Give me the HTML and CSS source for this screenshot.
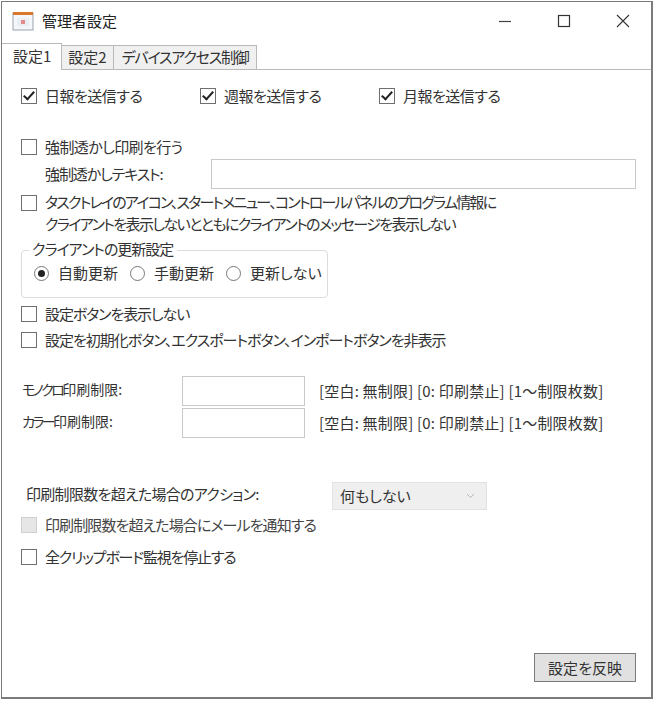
FILE: index.html
```html
<!DOCTYPE html>
<html lang="ja">
<head>
  <meta charset="UTF-8">
  <title>管理者設定</title>
  <link rel="stylesheet" href="styles.css">
</head>
<body>
  <div class="window">
    <div class="titlebar">
      <svg class="app-icon" width="22" height="20" viewBox="0 0 22 20">
        <rect x="1" y="2" width="20" height="17" fill="#f4f6fa" stroke="#9aa3b0"/>
        <rect x="1" y="1" width="20" height="3" fill="#d9772b"/>
        <rect x="5" y="7" width="12" height="8" fill="#e9edf4"/>
        <rect x="9" y="9" width="4" height="4" fill="#e58a8a"/>
      </svg>
      <span class="title">管理者設定</span>
      <div class="controls">
        <svg width="14" height="14" viewBox="0 0 14 14"><path d="M1 7.5H13" stroke="#444" stroke-width="1.2"/></svg>
        <svg width="14" height="14" viewBox="0 0 14 14"><rect x="1.5" y="1.5" width="11" height="11" fill="none" stroke="#333" stroke-width="1.2"/></svg>
        <svg width="14" height="14" viewBox="0 0 14 14"><path d="M1 1L13 13M13 1L1 13" stroke="#333" stroke-width="1.1"/></svg>
      </div>
    </div>

    <div class="tabs">
      <div class="tab active">設定1</div>
      <div class="tab">設定2</div>
      <div class="tab tab-device">デバイスアクセス制御</div>
    </div>

    <div class="panel">
      <div class="row report-row">
        <label class="check report"><span class="box checked"></span>日報を送信する</label>
        <label class="check report"><span class="box checked"></span>週報を送信する</label>
        <label class="check report"><span class="box checked"></span>月報を送信する</label>
      </div>

      <label class="check watermark"><span class="box"></span>強制透かし印刷を行う</label>
      <div class="row watermark-text">
        <span class="wm-label">強制透かしテキスト:</span>
        <span class="input wm-input"></span>
      </div>

      <label class="check multiline"><span class="box"></span><span><span class="line-a">タスクトレイのアイコン、スタートメニュー、コントロールパネルのプログラム情報に</span><span class="line-b">クライアントを表示しないとともにクライアントのメッセージを表示しない</span></span></label>

      <div class="group">
        <div class="group-title">クライアントの更新設定</div>
        <div class="row radios">
          <label class="radio"><span class="dot on"></span>自動更新</label>
          <label class="radio"><span class="dot"></span>手動更新</label>
          <label class="radio"><span class="dot"></span>更新しない</label>
        </div>
      </div>

      <label class="check after-group"><span class="box"></span>設定ボタンを表示しない</label>
      <label class="check next"><span class="box"></span>設定を初期化ボタン、エクスポートボタン、インポートボタンを非表示</label>

      <div class="row limit first-limit">
        <span class="limit-label"><span class="kana">モノクロ</span>印刷制限:</span>
        <span class="input limit-input"></span>
        <span class="hint">[空白: 無制限] [0: 印刷禁止] [1～制限枚数]</span>
      </div>
      <div class="row limit">
        <span class="limit-label"><span class="kana">カラー</span>印刷制限:</span>
        <span class="input limit-input"></span>
        <span class="hint">[空白: 無制限] [0: 印刷禁止] [1～制限枚数]</span>
      </div>

      <div class="row action">
        <span class="action-label">印刷制限数を超えた場合のアクション:</span>
        <div class="select">
          何もしない
          <svg width="9" height="6" viewBox="0 0 9 6"><path d="M1 1L4.5 4.5L8 1" fill="none" stroke="#b5b5b5"/></svg>
        </div>
      </div>
      <label class="check mail"><span class="box disabled"></span>印刷制限数を超えた場合にメールを通知する</label>
      <label class="check clip"><span class="box"></span>全クリップボード監視を停止する</label>

      <div class="footer">
        <button class="apply">設定を反映</button>
      </div>
    </div>
  </div>
</body>
</html>
```

FILE: styles.css
```css
/* ウィンドウ全体 */
body {
  margin: 0;
  width: 654px;
  height: 701px;
  background: #fff;
  font-family: "Noto Sans CJK JP", "Noto Sans", sans-serif;
  font-size: 15px;
  font-feature-settings: "palt";
  line-height: 20px;
  color: #333;
  overflow: hidden;
}
.window {
  width: 652px;
  height: 698px;
  margin-left: 1px;
  margin-top: 1px;
  border: 1px solid #7b7b7b;
  border-width: 1px 2px 2px 1px;
  box-sizing: border-box;
  display: flex;
  flex-direction: column;
}
.titlebar {
  height: 41px;
  flex: none;
  display: flex;
  align-items: center;
  padding: 0 0 4px 10px;
  box-sizing: border-box;
}
.app-icon {
  margin-right: 8px;
}
.title {
  color: #222;
  font-feature-settings: normal;
}
.controls {
  margin-left: auto;
  display: flex;
  gap: 45px;
  padding-right: 21px;
}

/* タブ */
.tabs {
  display: flex;
  height: 27px;
  flex: none;
  align-items: flex-end;
  position: relative;
  z-index: 1;
  margin-bottom: -1px;
}
.tab {
  height: 25px;
  line-height: 21px;
  padding: 0 6px;
  background: #f0f0f0;
  border: 1px solid #b9b9b9;
  box-sizing: border-box;
  margin-left: -1px;
}
.tab.active {
  height: 27px;
  line-height: 24px;
  background: #fff;
  border-left: 0;
  border-bottom: 0;
  margin-left: 0;
  padding: 0 10px 0 11px;
}
.tab-device {
  letter-spacing: -1.2px;
  padding: 0 7px 0 8px;
}
.panel {
  flex: 1;
  border-top: 1px solid #b9b9b9;
  padding: 16px 0 0 19px;
  display: flex;
  flex-direction: column;
}
.row {
  display: flex;
  align-items: center;
}

/* チェックボックス */
.check {
  display: flex;
  align-items: center;
  height: 20px;
  white-space: nowrap;
}
.box {
  width: 16px;
  height: 16px;
  border: 1px solid #6f6f6f;
  box-sizing: border-box;
  margin-right: 8px;
  flex: none;
  background: #fff;
  position: relative;
}
.box.checked::after {
  content: "";
  position: absolute;
  left: 4px;
  top: 0;
  width: 4px;
  height: 9px;
  border: solid #222;
  border-width: 0 2px 2px 0;
  transform: rotate(42deg);
}
.box.disabled {
  background: #e6e6e6;
  border-color: #cfcfcf;
}
.report {
  width: 179px;
  letter-spacing: -0.5px;
}
.watermark {
  margin-top: 31px;
  letter-spacing: -0.6px;
}
.watermark-text {
  margin-top: 2px;
  padding-left: 24px;
  height: 30px;
}
.wm-label {
  width: 166px;
  letter-spacing: -1.1px;
}
.input {
  display: block;
  background: #fff;
  border: 1px solid #c9c9c9;
  box-sizing: border-box;
}
.wm-input {
  width: 425px;
  height: 30px;
}
.multiline {
  margin-top: 2px;
  height: auto;
  align-items: flex-start;
  line-height: 22px;
}
.multiline .box {
  margin-top: 4px;
}
.line-a,
.line-b {
  display: block;
}
.line-a {
  letter-spacing: -1.8px;
}
.line-b {
  letter-spacing: -1.6px;
}

/* 更新設定グループ */
.group {
  position: relative;
  margin-top: 15px;
  width: 307px;
  height: 48px;
  border: 1px solid #dcdcdc;
  border-radius: 4px;
  box-sizing: border-box;
  padding: 12px 0 0 12px;
}
.group-title {
  position: absolute;
  left: 7px;
  top: -12px;
  padding: 0 4px 0 3px;
  background: #fff;
  letter-spacing: -1px;
}
.radios {
  gap: 12px;
}
.radio {
  display: flex;
  align-items: center;
}
.dot {
  width: 15px;
  height: 15px;
  border: 1px solid #777;
  border-radius: 50%;
  box-sizing: border-box;
  margin-right: 9px;
  position: relative;
}
.dot.on::after {
  content: "";
  position: absolute;
  left: 3px;
  top: 3px;
  width: 7px;
  height: 7px;
  border-radius: 50%;
  background: #222;
}
.after-group {
  margin-top: 6px;
  letter-spacing: -1.1px;
}
.next {
  margin-top: 6px;
  letter-spacing: -1px;
}

/* 印刷制限 */
.limit {
  height: 31px;
  margin-top: 1px;
  padding-left: 1px;
}
.first-limit {
  margin-top: 25px;
}
.limit-label {
  width: 160px;
  margin-top: -3px;
  font-size: 14px;
}
.kana {
  letter-spacing: -2.6px;
}
.limit-input {
  width: 123px;
  height: 30px;
}
.hint {
  margin-left: 14px;
  letter-spacing: 0.2px;
}
.action {
  margin-top: 44px;
  padding-left: 5px;
  height: 28px;
}
.action-label {
  width: 306px;
  margin-top: -5px;
  letter-spacing: -0.7px;
}
.select {
  width: 155px;
  height: 28px;
  background: #efefef;
  border: 1px solid #e2e2e2;
  box-sizing: border-box;
  display: flex;
  align-items: center;
  justify-content: space-between;
  padding: 0 11px 0 7px;
}
.mail {
  margin-top: 5px;
  color: #444;
  letter-spacing: -0.9px;
}
.clip {
  margin-top: 12px;
  letter-spacing: -1.2px;
}

/* ボタン */
.footer {
  margin-top: auto;
  display: flex;
  justify-content: flex-end;
  padding: 0 15px 15px 0;
}
.apply {
  width: 102px;
  height: 29px;
  background: #e1e1e1;
  border: 1px solid #7a7a7a;
  padding: 0;
  font: inherit;
  font-feature-settings: "palt";
  color: #333;
}
```
